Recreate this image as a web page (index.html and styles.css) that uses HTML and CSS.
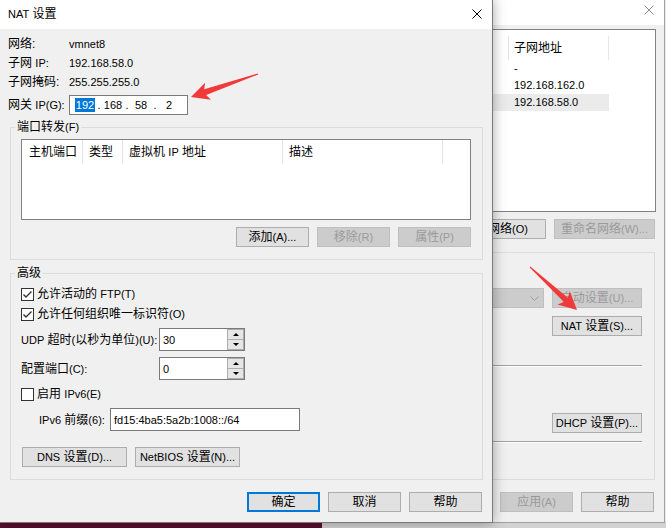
FILE: index.html
```html
<!DOCTYPE html>
<html lang="zh-CN">
<head>
<meta charset="utf-8">
<title>NAT 设置</title>
<link rel="stylesheet" href="styles.css">
</head>
<body>
<div class="desktop">
  <div class="bg-window bg-left"></div>
  <div class="bg-window bg-right"></div>

  <section class="editor">
    <header class="ew-titlebar">
      <span class="ew-title">虚拟网络编辑器</span>
      <span class="ew-close"><svg width="10" height="10" viewBox="0 0 10 10"><path d="M0.5 0.5L9.5 9.5M9.5 0.5L0.5 9.5"/></svg></span>
    </header>
    <div class="ew-body">
      <div class="ew-list">
        <div class="ew-row ew-head">
          <span class="c1">名称</span><span class="c2">类型</span><span class="c3">外部连接</span><span class="c4">主机连接</span><span class="c5"><span class="en">DHCP</span></span><span class="c6">子网地址</span>
        </div>
        <div class="ew-row ew-item">
          <span class="c1 en">VMnet0</span><span class="c2">桥接模式</span><span class="c3">自动桥接</span><span class="c4">-</span><span class="c5">-</span><span class="c6 en">-</span>
        </div>
        <div class="ew-row ew-item">
          <span class="c1 en">VMnet1</span><span class="c2">仅主机模式</span><span class="c3">-</span><span class="c4">已连接</span><span class="c5">已启用</span><span class="c6 en">192.168.162.0</span>
        </div>
        <div class="ew-row ew-item selected">
          <span class="c1 en">VMnet8</span><span class="c2"><span class="en">NAT</span> 模式</span><span class="c3"><span class="en">NAT</span> 模式</span><span class="c4">已连接</span><span class="c5">已启用</span><span class="c6 en">192.168.58.0</span>
        </div>
      </div>
      <div class="ew-btns">
        <button class="btn w100">添加网络<span class="en">(E)...</span></button>
        <button class="btn w100">移除网络<span class="en">(O)</span></button>
        <button class="btn w101" disabled>重命名网络<span class="en">(W)...</span></button>
      </div>
      <fieldset class="group ew-group">
        <legend><span class="en">VMnet</span> 信息</legend>
        <div class="ew-r r-bridge"><span class="radio"></span><span class="txt">桥接模式(将虚拟机直接连接到外部网络)<span class="en">(B)</span></span></div>
        <div class="ew-r r-bridgeto">
          <span class="bridge-label">已桥接至<span class="en">(G):</span></span>
          <span class="combo"><span class="combo-text">自动</span><svg class="chev" width="9" height="5" viewBox="0 0 9 5"><path d="M0.5 0.5L4.5 4.5L8.5 0.5"/></svg></span>
          <button class="btn w90" disabled>自动设置<span class="en">(U)...</span></button>
        </div>
        <div class="ew-r r-nat"><span class="radio on"></span><span class="txt"><span class="en">NAT</span> 模式(与虚拟机共享主机的 <span class="en">IP</span> 地址)<span class="en">(N)</span></span>
          <button class="btn w90 push"><span class="en">NAT</span> 设置<span class="en">(S)...</span></button>
        </div>
        <div class="ew-r r-host"><span class="radio"></span><span class="txt">仅主机模式(在专用网络内连接虚拟机)<span class="en">(H)</span></span></div>
        <div class="sep sep1"></div>
        <div class="ew-r r-adapter"><span class="mini-chk"></span><span class="txt">将主机虚拟适配器连接到此网络<span class="en">(V)</span></span></div>
        <div class="ew-r r-adname"><span class="txt">主机虚拟适配器名称: <span class="en">VMware</span> 网络适配器 <span class="en">VMnet8</span></span></div>
        <div class="ew-r r-dhcp"><span class="mini-chk"></span><span class="txt">使用本地 <span class="en">DHCP</span> 服务将 <span class="en">IP</span> 地址分配给虚拟机<span class="en">(D)</span></span>
          <button class="btn w90 push"><span class="en">DHCP</span> 设置<span class="en">(P)...</span></button>
        </div>
        <div class="sep sep2"></div>
        <div class="ew-r r-subnet"><span class="txt">子网 <span class="en">IP (I):</span></span><span class="mini-box en">192.168.58.0</span><span class="txt">子网掩码<span class="en">(M):</span></span><span class="mini-box en">255.255.255.0</span></div>
      </fieldset>
      <div class="ew-footer">
        <button class="btn w100 restore">还原默认设置<span class="en">(R)</span></button>
        <button class="btn">确定</button>
        <button class="btn">取消</button>
        <button class="btn" disabled>应用<span class="en">(A)</span></button>
        <button class="btn">帮助</button>
      </div>
    </div>
  </section>

  <section class="dialog">
    <header class="titlebar">
      <span class="title"><span class="en">NAT</span> 设置</span>
      <span class="close"><svg width="10" height="10" viewBox="0 0 10 10"><path d="M0.5 0.5L9.5 9.5M9.5 0.5L0.5 9.5"/></svg></span>
    </header>
    <div class="dlg-body">
      <div class="info">
        <span>网络:</span><span class="en">vmnet8</span>
        <span>子网 <span class="en">IP:</span></span><span class="en">192.168.58.0</span>
        <span>子网掩码:</span><span class="en">255.255.255.0</span>
      </div>
      <div class="gw-row">
        <label>网关 <span class="en">IP(G):</span></label>
        <div class="ip-box en">
          <span class="ip-field"><span class="sel">192</span></span><span class="ip-dot">.</span><span class="ip-field">168</span><span class="ip-dot">.</span><span class="ip-field">58</span><span class="ip-dot">.</span><span class="ip-field">2</span>
        </div>
      </div>

      <fieldset class="group port-group">
        <legend>端口转发<span class="en">(F)</span></legend>
        <div class="pf-list">
          <div class="pf-head">
            <span class="h1">主机端口</span><span class="h2">类型</span><span class="h3"><span class="txt">虚拟机 <span class="en">IP</span> 地址</span></span><span class="h4">描述</span>
          </div>
        </div>
        <div class="pf-buttons">
          <button class="btn">添加<span class="en">(A)...</span></button>
          <button class="btn" disabled>移除<span class="en">(R)</span></button>
          <button class="btn" disabled>属性<span class="en">(P)</span></button>
        </div>
      </fieldset>

      <fieldset class="group adv-group">
        <legend>高级</legend>
        <div class="chk-row first">
          <span class="chk"><svg width="11" height="11" viewBox="0 0 11 11"><polyline points="1.5,5.5 4,8 9.5,2.5"/></svg></span><span class="txt">允许活动的 <span class="en">FTP(T)</span></span>
        </div>
        <div class="chk-row">
          <span class="chk"><svg width="11" height="11" viewBox="0 0 11 11"><polyline points="1.5,5.5 4,8 9.5,2.5"/></svg></span><span class="txt">允许任何组织唯一标识符<span class="en">(O)</span></span>
        </div>
        <div class="field-row udp-row">
          <label><span class="en">UDP</span> 超时<span class="en">(</span>以秒为单位<span class="en">)(U):</span></label>
          <div class="spin">
            <span class="spin-val en">30</span>
            <span class="spin-btns"><span class="up"></span><span class="down"></span></span>
          </div>
        </div>
        <div class="field-row port-row">
          <label>配置端口<span class="en">(C):</span></label>
          <div class="spin">
            <span class="spin-val en">0</span>
            <span class="spin-btns"><span class="up"></span><span class="down"></span></span>
          </div>
        </div>
        <div class="chk-row ipv6-row">
          <span class="chk"></span><span class="txt">启用 <span class="en">IPv6(E)</span></span>
        </div>
        <div class="field-row prefix-row">
          <label><span class="en">IPv6</span> 前缀<span class="en">(6):</span></label>
          <div class="prefix-box en">fd15:4ba5:5a2b:1008::/64</div>
        </div>
        <div class="adv-buttons">
          <button class="btn"><span class="en">DNS</span> 设置<span class="en">(D)...</span></button>
          <button class="btn"><span class="en">NetBIOS</span> 设置<span class="en">(N)...</span></button>
        </div>
      </fieldset>

      <div class="dlg-footer">
        <button class="btn default">确定</button>
        <button class="btn">取消</button>
        <button class="btn">帮助</button>
      </div>
    </div>
  </section>

  <svg class="marks" width="666" height="528" viewBox="0 0 666 528">
    <polygon points="191,97 205.1,82.7 204.2,89.3 257.8,73.5 258.2,74.5 206.2,94.9 210.9,99.7"/>
    <polygon points="577,310 557.6,304.4 563.9,302.1 529.7,267.4 530.3,266.6 567.9,297.7 569.8,291.2"/>
  </svg>
</div>
</body>
</html>
```

FILE: styles.css
```css
* { box-sizing: border-box; }
html, body { margin: 0; padding: 0; }
body {
  width: 666px;
  height: 528px;
  overflow: hidden;
  font: 12px/16px "Liberation Sans", "Noto Sans CJK SC", sans-serif;
  color: #000;
}
.en { font-family: "Liberation Sans", sans-serif; font-size: 11px; }
.txt { white-space: nowrap; }

.desktop {
  position: relative;
  width: 666px;
  height: 528px;
  overflow: hidden;
  background: #d2d2d2;
}
.bg-window { position: absolute; }
.bg-left { left: 0; top: 522px; width: 322px; height: 6px; background: #5b0f30; }
.bg-right { left: 664px; top: 0; width: 2px; height: 522px; background: #ececec; }

/* ---------- buttons ---------- */
.btn {
  font: inherit;
  line-height: 16px;
  height: 20px;
  width: 73px;
  padding: 0;
  margin: 0;
  background: #e1e1e1;
  border: 1px solid #adadad;
  color: #000;
  display: inline-block;
  text-align: center;
  white-space: nowrap;
  flex: none;
}
.btn:disabled { background: #cccccc; border-color: #bfbfbf; color: #9a9a9a; }
.btn.default { border: 2px solid #0078d7; }
.w90 { width: 90px; }
.w100 { width: 100px; }
.w101 { width: 101px; }

/* ---------- group boxes ---------- */
.group {
  margin: 0;
  border: 1px solid #dcdcdc;
  padding: 0;
  min-width: 0;
}
.group > legend { padding: 0 2px; margin-left: -6px; line-height: 16px; }

/* ---------- back window: virtual network editor ---------- */
.editor {
  position: absolute;
  left: 40px;
  top: -1px;
  width: 625px;
  height: 524px;
  border: 1px solid #a0a0a0;
  background: #f0f0f0;
  z-index: 1;
}
.ew-titlebar {
  height: 25px;
  background: #fff;
  display: flex;
  justify-content: space-between;
  align-items: flex-start;
  padding-left: 8px;
}
.ew-title { line-height: 19px; color: #999; }
.ew-close { width: 30px; height: 19px; display: flex; align-items: center; justify-content: center; }
.ew-close path { stroke: #8a8a8a; stroke-width: 1; fill: none; }
.ew-body { padding: 4px 8px 0 10px; }
.ew-list { height: 183px; border: 1px solid #828282; background: #fff; }
.ew-row { display: flex; }
.ew-row > span { flex: none; white-space: nowrap; overflow: hidden; padding-left: 5px; }
.ew-head { height: 30px; align-items: flex-end; }
.ew-head > span { height: 24px; line-height: 24px; border-right: 1px solid #e5e5e5; }
.ew-item { height: 17px; line-height: 17px; }
.ew-item.selected > span { background: #ebebeb; }
.c1, .c2, .c4, .c5 { width: 80px; }
.c3 { width: 137px; }
.c6 { width: 100px; }
.ew-btns { display: flex; justify-content: flex-end; gap: 8px; margin: 7px 1px 0 0; }
.ew-group { margin: 5px 1px 0 0; padding: 0 12px 5px 10px; }
.ew-r { display: flex; align-items: center; height: 20px; white-space: nowrap; }
.r-bridge { margin-top: 4px; }
.r-bridgeto { margin-top: 4px; padding-left: 18px; }
.bridge-label { width: 90px; }
.combo {
  flex: 1;
  height: 20px;
  margin-right: 8px;
  background: #cccccc;
  border: 1px solid #bfbfbf;
  color: #9a9a9a;
  display: flex;
  align-items: center;
  justify-content: space-between;
  padding: 0 4px;
}
.chev path { stroke: #a0a0a0; stroke-width: 1; fill: none; }
.r-nat { margin-top: 8px; }
.r-host { margin-top: 4px; }
.push { margin-left: auto; }
.radio {
  width: 12px; height: 12px; border: 1px solid #333; border-radius: 50%;
  background: #fff; margin-right: 4px; flex: none;
}
.radio.on { background: radial-gradient(circle, #333 0 3px, #fff 3.5px); }
.mini-chk { width: 13px; height: 13px; border: 1px solid #333; background: #fff; margin-right: 4px; flex: none; }
.sep { height: 2px; border-top: 1px solid #a0a0a0; border-bottom: 1px solid #fff; }
.sep1 { margin-top: 5px; }
.r-adapter { margin-top: 6px; }
.r-adname { padding-left: 18px; }
.sep2 { margin-top: 8px; }
.r-subnet { margin-top: 8px; height: 23px; }
.mini-box {
  width: 100px; height: 23px; margin: 0 10px 0 6px;
  border: 1px solid #7a7a7a; background: #fff;
  display: flex; align-items: center; padding-left: 3px;
}
.ew-footer { display: flex; gap: 8px; margin: 12px 2px 0 0; }
.ew-footer .restore { margin-right: auto; }

/* ---------- NAT dialog ---------- */
.dialog {
  position: absolute;
  left: -1px;
  top: -1px;
  width: 494px;
  height: 524px;
  border: 1px solid #7a7a7a;
  background: #f0f0f0;
  box-shadow: 0 0 12px rgba(0, 0, 0, 0.35);
  z-index: 2;
}
.titlebar {
  height: 29px;
  background: #fff;
  display: flex;
  justify-content: space-between;
  align-items: center;
  padding-left: 8px;
}
.title { padding-bottom: 2px; }
.close { width: 30px; height: 27px; display: flex; align-items: center; justify-content: center; margin-bottom: 2px; }
.close path { stroke: #000; stroke-width: 1; fill: none; }
.dlg-body { padding-top: 5px; }

.info {
  display: grid;
  grid-template-columns: 61px auto;
  grid-auto-rows: 19px;
  align-items: center;
  margin-left: 8px;
}
.gw-row { display: flex; align-items: center; height: 20px; margin: 4px 0 0 8px; }
.gw-row > label { width: 61px; }
.ip-box {
  width: 119px;
  height: 20px;
  border: 1px solid #7a7a7a;
  background: #fff;
  display: flex;
  align-items: center;
  padding-left: 3px;
}
.ip-field { width: 24px; text-align: center; }
.ip-dot { width: 4px; text-align: center; }
.sel { display: inline-block; background: #0078d7; color: #fff; line-height: 14px; padding: 0 1px; }

.port-group { margin: 4px 0 0 10px; width: 473px; padding: 0 11px 12px 10px; }
.pf-list { margin-top: 4px; height: 81px; border: 1px solid #828282; background: #fff; }
.pf-head { display: flex; height: 24px; }
.pf-head > span {
  border-right: 1px solid #e5e5e5;
  padding-left: 6px;
  line-height: 24px;
  white-space: nowrap;
  flex: none;
}
.pf-head .h1 { width: 61px; padding-left: 7px; }
.pf-head .h2 { width: 40px; }
.pf-head .h3 { width: 160px; }
.pf-head .h4 { width: 160px; }
.pf-buttons { display: flex; justify-content: flex-end; gap: 8px; margin-top: 7px; }

.adv-group { margin: 5px 0 0 10px; width: 473px; padding: 0 11px 12px 10px; }
.chk-row { display: flex; align-items: center; height: 20px; white-space: nowrap; }
.chk-row.first { margin-top: 3px; }
.chk {
  width: 13px;
  height: 13px;
  border: 1px solid #333;
  background: #fff;
  margin-right: 3px;
  display: flex;
  align-items: center;
  justify-content: center;
  flex: none;
}
.chk polyline { fill: none; stroke: #333; stroke-width: 1.4; }
.field-row { display: flex; align-items: center; height: 23px; white-space: nowrap; }
.udp-row { margin-top: 4px; }
.port-row { margin-top: 6px; }
.udp-row > label, .port-row > label { width: 138px; }
.spin {
  width: 86px;
  height: 23px;
  border: 1px solid #7a7a7a;
  background: #fff;
  display: flex;
}
.spin-val { flex: 1; padding-left: 3px; display: flex; align-items: center; }
.spin-btns { width: 17px; display: flex; flex-direction: column; }
.spin-btns > span {
  flex: 1;
  border: 1px solid #adadad;
  background: #e6e6e6;
  display: flex;
  align-items: center;
  justify-content: center;
}
.spin-btns > .down { border-top: none; }
.up::after {
  content: "";
  border-left: 3px solid transparent;
  border-right: 3px solid transparent;
  border-bottom: 3px solid #000;
}
.down::after {
  content: "";
  border-left: 3px solid transparent;
  border-right: 3px solid transparent;
  border-top: 3px solid #000;
}
.ipv6-row { margin-top: 4px; }
.prefix-row { margin-top: 4px; padding-left: 18px; }
.prefix-row > label { width: 71px; }
.prefix-box {
  width: 190px;
  height: 23px;
  border: 1px solid #7a7a7a;
  background: #fff;
  padding-left: 3px;
  display: flex;
  align-items: center;
}
.adv-buttons { display: flex; gap: 8px; margin: 16px 0 0 1px; }
.adv-buttons .btn { width: 105px; }

.dlg-footer { display: flex; justify-content: flex-end; gap: 8px; margin-top: 12px; padding-right: 10px; }

/* ---------- annotation arrows ---------- */
.marks { position: absolute; left: 0; top: 0; z-index: 3; pointer-events: none; }
.marks polygon { fill: #f03a3a; }
```
